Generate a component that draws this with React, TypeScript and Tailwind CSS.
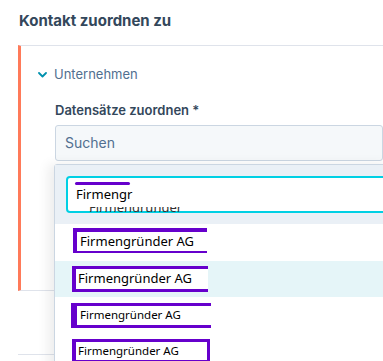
const purple = 'border-[#6600cc]'
const seg = { fontFamily: '"Noto Sans", "Open Sans", sans-serif' }

function Box({ text, className, textClass }: { text: string; className: string; textClass: string }) {
  return (
    <div className={`flex items-center bg-white ${purple} ${className}`}>
      <span className={`text-black whitespace-nowrap ${textClass}`} style={seg}>
        {text}
      </span>
    </div>
  )
}

export default function App() {
  return (
    <div className="relative w-[383px] h-[361px] overflow-hidden bg-white" style={{ fontFamily: 'Inter, "Noto Sans", sans-serif' }}>
      <div className="pt-[10px] pl-[19px] h-[45px] text-[15px] font-bold text-[#33475b]">Kontakt zuordnen zu</div>

      <div className="ml-[18px] h-[246px] border-l-[3px] border-l-[#ff7a59] border-t border-t-[#dfe3eb] border-b border-b-[#dfe3eb]">
        <div className="flex items-center h-[28px] mt-[15px] pl-[17px] gap-[7px] text-[13px] text-[#516f90]">
          <svg width="9" height="6" viewBox="0 0 9 6" fill="none">
            <path d="M1 1l3.5 3.5L8 1" stroke="#0091ae" strokeWidth="1.8" strokeLinecap="round" strokeLinejoin="round" />
          </svg>
          <span>Unternehmen</span>
        </div>
        <div className="pl-[34px] mt-[12px] text-[13px] font-semibold text-[#33475b]">Datensätze zuordnen *</div>
        <div className="ml-[34px] mt-[4px] h-[36px] rounded-[3px] border border-[#cbd6e2] bg-[#f5f8fa] flex items-center pl-[9px] text-[14px] text-[#516f90]">
          Suchen
        </div>
      </div>
      <div className="h-[64px] ml-[18px] border-b border-b-[#dfe3eb]"></div>

      <div className="absolute left-[54px] top-[164px] w-[340px] h-[210px] bg-white border border-[#cbd6e2] rounded-t-[3px] shadow-[-6px_0_12px_rgba(0,0,0,0.07)]">
        <div className="h-[59px] bg-[#eaf0f6] pt-[11px] pl-[11px]">
          <div className="relative h-[37px] rounded-[4px] border-2 border-[#00d0e4] bg-white">
            <div className="absolute left-[7px] top-[4px] w-[55px] h-[3px] rounded-full bg-[#6600cc]"></div>
            <div className="absolute left-[8px] top-[7px] text-[13px] text-black" style={seg}>Firmengr</div>
            <div className="absolute left-[21px] top-[29px] h-[5px] overflow-hidden">
              <div className="-mt-[9px] text-[13px] text-[#333] whitespace-nowrap" style={seg}>Firmengründer</div>
            </div>
          </div>
        </div>
        <div className="h-[37px] flex items-center pl-[18px]">
          <Box text="Firmengründer AG" className="w-[134px] h-[25px] border-l-[4px] border-t-[4px] border-b-[2px] pl-[3px] -mt-[4px]" textClass="text-[13px]" />
        </div>
        <div className="h-[36px] flex items-center pl-[17px] bg-[#e5f5f8]">
          <Box text="Firmengründer AG" className="w-[136px] h-[26px] border-l-[4px] border-t-[3px] border-b-[3px] pl-[2px]" textClass="text-[13px]" />
        </div>
        <div className="h-[36px] flex items-center pl-[16px]">
          <Box text="Firmengründer AG" className="w-[140px] h-[25px] border-l-[6px] border-t-[3px] border-b-[3px] pl-[3px]" textClass="text-[11.5px]" />
        </div>
        <div className="h-[36px] flex items-start pt-[6px] pl-[17px]">
          <Box text="Firmengründer AG" className="w-[138px] h-[24px] border-[3px] border-l-[4px] pl-[2px]" textClass="text-[11.5px]" />
        </div>
      </div>
    </div>
  )
}
